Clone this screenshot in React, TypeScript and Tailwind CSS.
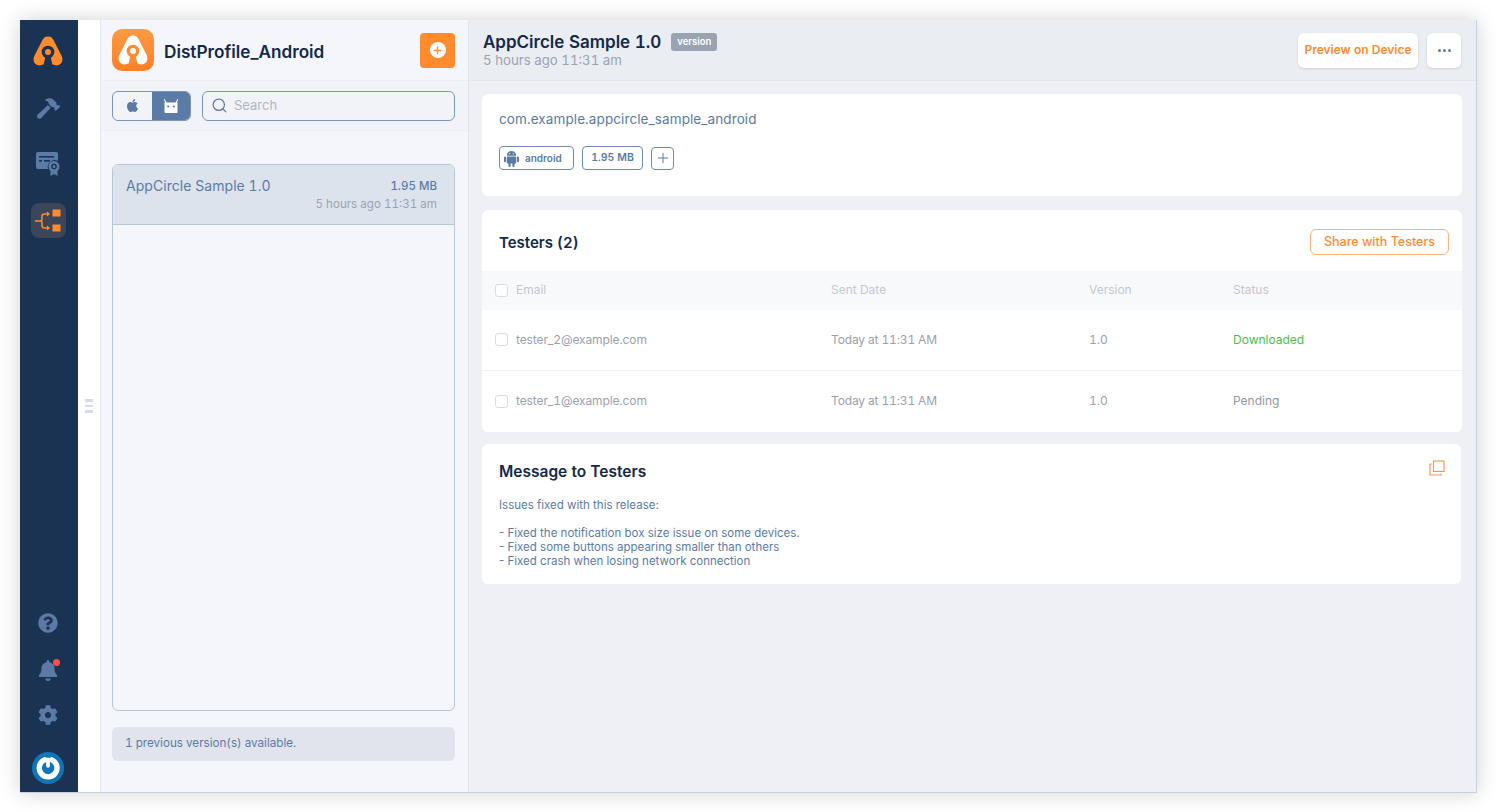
import React from 'react';
import { FaApple, FaBell, FaCog, FaHammer, FaQuestionCircle } from 'react-icons/fa';
import { Search, Plus } from 'lucide-react';

// A-shaped brand mark; body and hole colours differ between the rail and the app icon
function LogoMark({ body, hole, className }: { body: string; hole: string; className: string }) {
  return (
    <svg viewBox="0 0 30 30" className={className}>
      <path
        d="M15 1.500c2.600 0 4.300 1.500 5.400 3.700l7.400 14.600c1.700 3.400.5 8.700-4.600 8.700-3.300 0-5.500-2-8.200-2s-4.900 2-8.200 2c-5.100 0-6.300-5.300-4.600-8.700L9.600 5.200C10.700 3 12.400 1.500 15 1.500z"
        fill={body}
      />
      <path d="M12.600 20h4.800l1.600 7.500h-8z" fill={hole} />
      <circle cx="15" cy="16" r="6" fill={hole} />
      <circle cx="15" cy="16" r="2.800" fill={body} />
    </svg>
  );
}

function CertIcon() {
  return (
    <svg viewBox="0 0 24 24" className="w-[24px] h-[24px]">
      <path d="M2 0h18a2 2 0 0 1 2 2v7a7 7 0 0 0-10 8H2a2 2 0 0 1-2-2V2a2 2 0 0 1 2-2z" fill="#5b7ba6" />
      <rect x="3" y="4" width="15" height="1.600" fill="#1a3353" />
      <rect x="3" y="8" width="3" height="1.600" fill="#1a3353" />
      <rect x="8" y="8" width="6" height="1.600" fill="#1a3353" />
      <path d="M14.500 19v5l3.500-2 3.500 2v-5z" fill="#5b7ba6" />
      <circle cx="18" cy="14.500" r="5.500" fill="#5b7ba6" />
      <circle cx="18" cy="14.500" r="2.800" fill="#1a3353" />
      <circle cx="18" cy="14.500" r="1.500" fill="#5b7ba6" />
    </svg>
  );
}

function DistIcon() {
  return (
    <svg viewBox="0 0 26 24" className="w-[26px] h-[24px]" fill="none" stroke="#fe8c2e" strokeWidth="1.500">
      <path d="M0 12h5M5 12c1.500 0 2-.8 2-2V7.500C7 6 8 5 9.500 5H13M5 12c1.500 0 2 .8 2 2v2.500C7 18 8 19 9.500 19H13" />
      <path d="M12 2.500 15 5l-3 2.500zM12 16.500l3 2.500-3 2.500z" fill="#fe8c2e" stroke="none" />
      <rect x="17.500" y="0.500" width="8" height="7" fill="#fe8c2e" stroke="none" />
      <rect x="17.500" y="15.500" width="8" height="7" fill="#fe8c2e" stroke="none" />
    </svg>
  );
}

function AndroidRobot() {
  return (
    <svg viewBox="0 0 16 18" className="w-[15px] h-[17px]" fill="#5b7ba6">
      <path d="M3 6a5 5 0 0 1 10 0z" />
      <rect x="3" y="6.800" width="10" height="7.400" rx="1" />
      <rect x="0" y="6.800" width="2.200" height="6.200" rx="1.100" />
      <rect x="13.800" y="6.800" width="2.200" height="6.200" rx="1.100" />
      <rect x="4.800" y="13" width="2.300" height="5" rx="1.100" />
      <rect x="8.900" y="13" width="2.300" height="5" rx="1.100" />
      <circle cx="6" cy="3.800" r=".6" fill="#ffffff" />
      <circle cx="10" cy="3.800" r=".6" fill="#ffffff" />
    </svg>
  );
}

function PowerAvatar() {
  return (
    <div className="w-[32px] h-[32px] rounded-full bg-[#0f75b8] flex items-center justify-center">
      <svg viewBox="0 0 24 24" className="w-[26px] h-[26px]" fill="none" stroke="#ffffff" strokeWidth="5" strokeLinecap="round">
        <path d="M9 4.400a8.200 8.200 0 1 0 6.500.1" />
        <path d="M12 4v6" strokeWidth="3.500" />
      </svg>
    </div>
  );
}

function Rail() {
  return (
    <aside className="w-[58px] shrink-0 bg-[#1a3353] flex flex-col items-center pr-[2px]">
      <LogoMark body="#fe8c2e" hole="#1a3353" className="w-[32px] h-[32px] mt-[15px]" />
      <FaHammer className="mt-[30px] w-[23px] h-[23px] text-[#5b7ba6]" />
      <div className="mt-[32px]"><CertIcon /></div>
      <div className="mt-[27px] w-[35px] h-[35px] rounded-[8px] bg-[#3d4658] flex items-center justify-center">
        <DistIcon />
      </div>
      <div className="mt-auto flex flex-col items-center">
        <FaQuestionCircle className="w-[20px] h-[20px] text-[#5b7ba6]" />
        <div className="relative mt-[27px]">
          <FaBell className="w-[20px] h-[21px] text-[#5b7ba6]" />
          <span className="absolute -top-[1px] -right-[2px] w-[7px] h-[7px] rounded-full bg-[#f25050]" />
        </div>
        <FaCog className="mt-[24px] w-[20px] h-[20px] text-[#5b7ba6]" />
        <div className="mt-[27px] mb-[8px]"><PowerAvatar /></div>
      </div>
    </aside>
  );
}

function ListPanel() {
  return (
    <section className="w-[369px] shrink-0 flex flex-col bg-[#f5f6fb] border-l border-r border-[#e1e5ee]">
      <div className="h-[61px] shrink-0 flex items-center justify-between pl-[11px] pr-[13px] border-b border-[#eceef4]">
        <div className="flex items-center gap-[10px]">
          <div className="w-[42px] h-[42px] rounded-[10px] bg-gradient-to-b from-[#fe9a42] to-[#fd7f25] flex items-center justify-center">
            <LogoMark body="#ffffff" hole="#fe8c2e" className="w-[32px] h-[32px]" />
          </div>
          <h1 className="text-[17.200px] font-semibold text-[#14294a] mt-[3px]">DistProfile_Android</h1>
        </div>
        <button className="w-[35px] h-[35px] rounded-[4px] bg-[#fe8c2e] flex items-center justify-center">
          <span className="w-[16px] h-[16px] rounded-full bg-white flex items-center justify-center">
            <Plus className="w-[11px] h-[11px] text-[#fe8c2e]" strokeWidth={3} />
          </span>
        </button>
      </div>
      <div className="h-[50px] shrink-0 flex items-center gap-[11px] pl-[11px] pr-[13px] bg-[#f1f3f8] border-b border-[#eceef4]">
        <div className="w-[79px] h-[30px] flex rounded-[6px] border border-[#7a95b9] overflow-hidden">
          <div className="w-[39px] flex items-center justify-center">
            <FaApple className="w-[15px] h-[15px] text-[#5b7ba6]" />
          </div>
          <div className="flex-1 bg-[#5b7ba6] flex items-center justify-center">
            <svg viewBox="0 0 16 16" className="w-[16px] h-[16px]" fill="#ffffff">
              <path d="M1.500 4.500h13V14a1 1 0 0 1-1 1h-11a1 1 0 0 1-1-1z" />
              <path d="M1.500 1 3.800 5H2.300L.8 1.500zM14.500 1 12.200 5h1.500l1.500-3.500z" />
              <circle cx="5.200" cy="8.500" r="1.100" fill="#5b7ba6" />
              <circle cx="10.800" cy="8.500" r="1.100" fill="#5b7ba6" />
            </svg>
          </div>
        </div>
        <div className="flex-1 h-[30px] rounded-[6px] border border-[#7a95b9] flex items-center gap-[6px] pl-[8px]">
          <Search className="w-[17px] h-[17px] text-[#5b7ba6]" strokeWidth={1.75} />
          <span className="text-[13px] text-[#b0b6c3]">Search</span>
        </div>
      </div>
      <div className="flex-1 flex flex-col pt-[33px] pl-[11px] pr-[13px] pb-[31px]">
        <div className="flex-1 rounded-[6px] border border-[#b6c5da] overflow-hidden">
          <div className="h-[60px] bg-[#dde3ec] border-b border-[#b6c5da] flex justify-between pl-[13px] pr-[17px] pt-[12px]">
            <span className="text-[14px] leading-[18px] tracking-[0.05px] text-[#5b7ba6]">AppCircle Sample 1.0</span>
            <div className="flex flex-col items-end">
              <span className="text-[11.500px] leading-[18px] font-medium text-[#5b7ba6]">1.95 MB</span>
              <span className="text-[11.600px] leading-[18px] text-[#9aa3b2]">5 hours ago 11:31 am</span>
            </div>
          </div>
        </div>
        <div className="mt-[16px] h-[34px] rounded-[6px] bg-[#e1e4ec] flex items-center pl-[13px]">
          <span className="text-[11.650px] text-[#5b7ba6]">1 previous version(s) available.</span>
        </div>
      </div>
    </section>
  );
}

function CheckBox() {
  return <span className="block w-[13px] h-[13px] rounded-[3px] border border-[#d9dce3] bg-white" />;
}

const testers = [
  { email: 'tester_2@example.com', sent: 'Today at 11:31 AM', version: '1.0', status: 'Downloaded', statusCls: 'text-[#4cc04c]' },
  { email: 'tester_1@example.com', sent: 'Today at 11:31 AM', version: '1.0', status: 'Pending', statusCls: 'text-[#8f97a5]' },
];

function Main() {
  return (
    <main className="flex-1 min-w-0 flex flex-col bg-[#eef0f5]">
      <header className="h-[61px] shrink-0 bg-[#eaedf2] border-b border-[#e3e6ed] flex items-center justify-between pl-[14px] pr-[15px]">
        <div className="mb-[3px]">
          <div className="flex items-center gap-[10px]">
            <h2 className="text-[17px] leading-[22px] font-semibold text-[#14294a]">AppCircle Sample 1.0</h2>
            <span className="h-[18px] px-[6px] rounded-[3px] bg-[#9aa3b2] text-white text-[9.500px] font-semibold leading-[18px]">version</span>
          </div>
          <p className="text-[13.250px] leading-[14px] text-[#9aa3b2]">5 hours ago 11:31 am</p>
        </div>
        <div className="flex items-center gap-[9px]">
          <button className="h-[35px] w-[120px] rounded-[6px] bg-white shadow-sm text-[12px] font-semibold text-[#fe8c2e]">Preview on Device</button>
          <button className="h-[35px] w-[34px] rounded-[6px] bg-white shadow-sm flex items-center justify-center gap-[2px]">
            <span className="w-[3px] h-[3px] rounded-full bg-[#5b7ba6]" />
            <span className="w-[3px] h-[3px] rounded-full bg-[#5b7ba6]" />
            <span className="w-[3px] h-[3px] rounded-full bg-[#5b7ba6]" />
          </button>
        </div>
      </header>

      <div className="flex flex-col pl-[13px] pr-[14px] pt-[13px]">
        <div className="h-[102px] rounded-[6px] bg-white pl-[17px] pt-[16px]">
          <p className="text-[13.500px] leading-[18px] tracking-[0.1px] text-[#5b7ba6]">com.example.appcircle_sample_android</p>
          <div className="flex items-center gap-[8px] mt-[18px]">
            <span className="h-[24px] w-[75px] rounded-[4px] border border-[#6e8bb1] flex items-center pl-[4px] gap-[6px]">
              <AndroidRobot />
              <span className="text-[10px] font-semibold text-[#5b7ba6]">android</span>
            </span>
            <span className="h-[24px] w-[61px] rounded-[4px] border border-[#6e8bb1] flex items-center justify-center text-[10.500px] font-semibold text-[#5b7ba6]">1.95 MB</span>
            <span className="h-[23px] w-[23px] rounded-[4px] border border-[#6e8bb1] flex items-center justify-center">
              <Plus className="w-[16px] h-[16px] text-[#5b7ba6]" strokeWidth={1.5} />
            </span>
          </div>
        </div>

        <div className="mt-[14px] rounded-[6px] bg-white overflow-hidden">
          <div className="h-[61px] flex justify-between pl-[17px] pr-[13px] pt-[19px]">
            <h3 className="text-[15px] leading-[26px] font-semibold text-[#14294a] mt-[1px]">Testers (2)</h3>
            <button className="h-[26px] w-[139px] rounded-[6px] border-[1.500px] border-[#fdb47a] text-[12.500px] font-medium text-[#fe8c2e]">Share with Testers</button>
          </div>
          <div className="h-[39px] bg-[#f8f9fb] grid grid-cols-[336px_258px_144px_1fr] items-center pl-[13px] pb-[1px] text-[12px] text-[#c3c7d0]">
            <div className="flex items-center gap-[8px]"><CheckBox /><span>Email</span></div>
            <span>Sent Date</span>
            <span>Version</span>
            <span>Status</span>
          </div>
          {testers.map((t, i) => (
            <div key={t.email} className={`h-[61px] grid grid-cols-[336px_258px_144px_1fr] items-center pl-[13px] pb-[1px] text-[12px] text-[#9aa1ae] ${i === 0 ? 'border-b border-[#f1f2f5]' : ''}`}>
              <div className="flex items-center gap-[8px]"><CheckBox /><span className="tracking-[-0.1px]">{t.email}</span></div>
              <span className="tracking-[-0.15px]">{t.sent}</span>
              <span>{t.version}</span>
              <span className={t.statusCls}>{t.status}</span>
            </div>
          ))}
        </div>

        <div className="mt-[12px] h-[140px] rounded-[6px] bg-white pl-[17px] pr-[16px] pt-[17px] mr-[1px]">
          <div className="flex items-start justify-between">
            <h3 className="text-[15.500px] leading-[22px] font-semibold text-[#14294a]">Message to Testers</h3>
            <svg viewBox="0 0 16 16" className="w-[16px] h-[16px] mt-[-1px]" fill="none" stroke="#f89157" strokeWidth="1.100">
              <rect x="4.500" y="1" width="10.500" height="10.500" />
              <path d="M2.500 4H1v11h11v-1.500" />
            </svg>
          </div>
          <div className="mt-[15px] text-[11.500px] leading-[14px] text-[#5b7ba6] normal-nums">
            <p>Issues fixed with this release:</p>
            <p className="mt-[13.500px]">- Fixed the notification box size issue on some devices.</p>
            <p>- Fixed some buttons appearing smaller than others</p>
            <p>- Fixed crash when losing network connection</p>
          </div>
        </div>
      </div>
    </main>
  );
}

export default function App() {
  return (
    <div className="h-[812px] bg-white pt-[20px] pb-[19px] pl-[20px] pr-[19px] font-['Inter','Liberation_Sans',sans-serif] tabular-nums overflow-hidden">
      <div className="h-full flex bg-white border-r border-b border-[#c9d0e0] shadow-[0_0_20px_rgba(0,0,0,0.18)]">
        <Rail />
        <div className="w-[22px] shrink-0 bg-white flex items-center justify-center">
          <div className="flex flex-col gap-[3px]">
            <span className="w-[8px] h-[2.500px] bg-[#d5dbe6]" />
            <span className="w-[8px] h-[2.500px] bg-[#d5dbe6]" />
            <span className="w-[8px] h-[2.500px] bg-[#d5dbe6]" />
          </div>
        </div>
        <ListPanel />
        <Main />
      </div>
    </div>
  );
}
